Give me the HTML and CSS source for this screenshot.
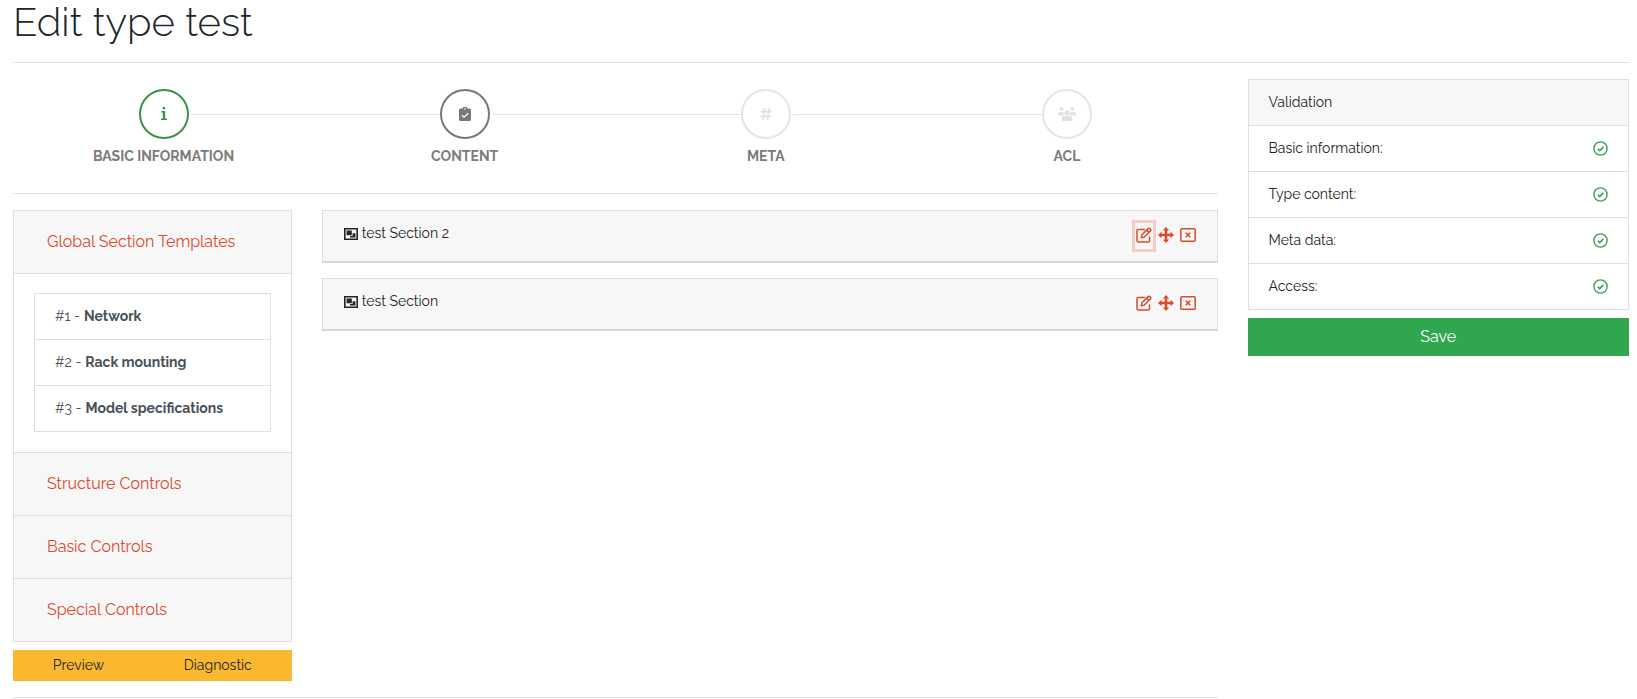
FILE: index.html
```html
<!DOCTYPE html>
<html lang="en">
<head>
<meta charset="utf-8">
<meta name="viewport" content="width=device-width, initial-scale=1">
<title>Edit type test</title>
<link rel="stylesheet" href="styles.css">
</head>
<body>
<svg class="sprite" aria-hidden="true">
  <symbol id="i-check" viewBox="0 0 15 15"><g fill="none" stroke="currentColor"><circle cx="7.500" cy="7.500" r="6.600" stroke-width="1.400"/><path d="M4.700 7.700l2 1.900 3.700-3.700" stroke-width="1.500"/></g></symbol>
  <symbol id="i-group" viewBox="0 0 16 12"><path fill="currentColor" fill-rule="evenodd" d="M1 0h14v12H1zM2.600 1.600v8.800h10.800V1.600z"/><path fill="currentColor" d="M3.600 2.600h5.200v4.600H3.600zM9.600 5.200h2.800v4.400H7V8h2.600z"/></symbol>
  <symbol id="i-edit" viewBox="0 0 16 16"><g fill="none" stroke="currentColor" stroke-width="1.500" stroke-linejoin="round" stroke-linecap="round"><path d="M8.500 2.500H2.300A1.300 1.300 0 0 0 1 3.800v9.900A1.300 1.300 0 0 0 2.300 15h9.900a1.300 1.300 0 0 0 1.300-1.300V10"/><path d="M5.300 10.700l.4-2.700 6.400-6.400a1.300 1.300 0 0 1 1.800 0l.5.5a1.300 1.300 0 0 1 0 1.800L8 10.300zM10.800 3l2.200 2.200"/></g></symbol>
  <symbol id="i-move" viewBox="0 0 16 16"><path fill="currentColor" d="M8 0l3.200 3.500H9.200v3.300h3.300V4.800L16 8l-3.500 3.200V9.200H9.200v3.300h2L8 16l-3.200-3.500h2V9.200H3.500v2L0 8l3.500-3.200v2h3.300V3.500h-2z"/></symbol>
  <symbol id="i-close" viewBox="0 0 16 14"><g fill="none" stroke="currentColor" stroke-width="1.500"><rect x=".8" y=".8" width="14.400" height="12.400" rx="1"/><path d="M5.700 4.700l4.600 4.600M10.300 4.700L5.700 9.300" stroke-width="1.500"/></g></symbol>
</svg>

<main class="page">
  <h1 class="title">Edit type test</h1>
  <hr class="rule">
  <div class="columns">
    <div class="editor">
      <nav aria-label="Steps">
        <ol class="steps">
          <li class="step step-done"><button class="step-button" type="button"><span class="step-circle"><svg width="6" height="14" viewBox="0 0 6 14"><path fill="currentColor" d="M1.700 0h2.400v2.300H1.700zM.3 4h3.900v7.500H6V13H0v-1.500h1.800v-6H.3z"/></svg></span>Basic information</button></li>
          <li class="step step-current"><button class="step-button" type="button" aria-current="step"><span class="step-circle"><svg width="12" height="14" viewBox="0 0 12 14"><path fill="currentColor" d="M1.500 1.500h2.300a2.200 2.200 0 0 1 4.400 0h2.300A1.500 1.500 0 0 1 12 3v9.500a1.500 1.500 0 0 1-1.500 1.500h-9A1.500 1.500 0 0 1 0 12.500V3a1.500 1.500 0 0 1 1.500-1.500z"/><path fill="#fff" d="M5.300 1.200h1.400v1.300H5.300z"/><path fill="none" stroke="#fff" stroke-width="1.300" d="M2.800 8.200l2.200 2 4.300-4"/></svg></span>Content</button></li>
          <li class="step"><button class="step-button" type="button"><span class="step-circle"><svg width="12" height="14" viewBox="0 0 12 14"><path fill="none" stroke="currentColor" stroke-width="1.700" d="M4.600 1L2.900 13M9.200 1L7.500 13M.9 4.700h11M.2 9.300h11"/></svg></span>Meta</button></li>
          <li class="step"><button class="step-button" type="button"><span class="step-circle"><svg width="18" height="14" viewBox="0 0 18 14"><g fill="currentColor"><circle cx="3.600" cy="2" r="2"/><circle cx="14.400" cy="2" r="2"/><circle cx="9" cy="5.800" r="2.600"/><path d="M0 8.500V7.300A2.300 2.300 0 0 1 2.300 5h2.400l.9.400c-.3 1.300.1 2.300.9 3.100zM18 8.500V7.300A2.300 2.300 0 0 0 15.700 5h-2.400l-.9.400c.3 1.300-.1 2.300-.9 3.100zM3.700 14v-1.700A3.200 3.200 0 0 1 6.900 9.100h4.200a3.200 3.200 0 0 1 3.200 3.200V14z"/></g></svg></span>ACL</button></li>
        </ol>
      </nav>
      <hr class="rule">
      <div class="workspace">
        <aside class="palette">
          <div class="accordion">
            <h2 class="accordion-header"><a href="#global">Global Section Templates</a></h2>
            <div class="accordion-body" id="global">
              <ul class="list">
                <li class="list-item">#1 - <strong>Network</strong></li>
                <li class="list-item">#2 - <strong>Rack mounting</strong></li>
                <li class="list-item">#3 - <strong>Model specifications</strong></li>
              </ul>
            </div>
            <h2 class="accordion-header"><a href="#structure">Structure Controls</a></h2>
            <h2 class="accordion-header"><a href="#basic">Basic Controls</a></h2>
            <h2 class="accordion-header"><a href="#special">Special Controls</a></h2>
          </div>
          <div class="tools">
            <button class="tool" type="button">Preview</button>
            <button class="tool" type="button">Diagnostic</button>
          </div>
        </aside>
        <div class="sections">
          <section class="section">
            <div class="section-name"><svg width="16" height="12"><use href="#i-group"/></svg>test Section 2</div>
            <div class="actions">
              <button class="action action-focus" type="button" aria-label="Edit"><svg width="16" height="16"><use href="#i-edit"/></svg></button>
              <button class="action" type="button" aria-label="Move"><svg width="16" height="16"><use href="#i-move"/></svg></button>
              <button class="action" type="button" aria-label="Delete"><svg width="16" height="14"><use href="#i-close"/></svg></button>
            </div>
          </section>
          <section class="section">
            <div class="section-name"><svg width="16" height="12"><use href="#i-group"/></svg>test Section</div>
            <div class="actions">
              <button class="action" type="button" aria-label="Edit"><svg width="16" height="16"><use href="#i-edit"/></svg></button>
              <button class="action" type="button" aria-label="Move"><svg width="16" height="16"><use href="#i-move"/></svg></button>
              <button class="action" type="button" aria-label="Delete"><svg width="16" height="14"><use href="#i-close"/></svg></button>
            </div>
          </section>
        </div>
      </div>
      <hr class="rule">
    </div>
    <aside class="summary">
      <ul class="list validation">
        <li class="list-item list-head">Validation</li>
        <li class="list-item">Basic information: <svg width="15" height="15"><use href="#i-check"/></svg></li>
        <li class="list-item">Type content: <svg width="15" height="15"><use href="#i-check"/></svg></li>
        <li class="list-item">Meta data: <svg width="15" height="15"><use href="#i-check"/></svg></li>
        <li class="list-item">Access: <svg width="15" height="15"><use href="#i-check"/></svg></li>
      </ul>
      <button class="save" type="button">Save</button>
    </aside>
  </div>
</main>
</body>
</html>
```

FILE: styles.css
```css
* {
  box-sizing: border-box;
}

body {
  margin: 0;
  background: #fff;
  color: #212529;
  font: 400 14px/21px Raleway, Lato, sans-serif;
}

button {
  border: 0;
  padding: 0;
  background: none;
  color: inherit;
  font: inherit;
  cursor: pointer;
}

svg {
  display: block;
  flex: none;
}

.sprite {
  position: absolute;
  width: 0;
  height: 0;
}

.page {
  padding: 0 8px 0 13px;
}

.title {
  margin: 0 0 18px;
  font-size: 40px;
  font-weight: 300;
  line-height: 44px;
}

.rule {
  margin: 0;
  border: 0;
  border-top: 1px solid #e1e1e1;
}

.columns,
.workspace {
  display: grid;
  grid-template-columns: repeat(4, minmax(0, 1fr));
  column-gap: 30px;
  align-items: start;
}

.editor,
.sections {
  grid-column: span 3;
}

.steps {
  display: flex;
  margin: 0;
  padding: 26px 0;
  list-style: none;
}

.step {
  display: flex;
  flex: 1;
  flex-direction: column;
  position: relative;
}

.step + .step::before {
  content: "";
  position: absolute;
  top: 25px;
  right: calc(50% + 25px);
  left: calc(-50% + 27px);
  border-top: 1px solid #e1e1e1;
}

.step-button {
  display: flex;
  flex-direction: column;
  align-items: center;
  gap: 7px;
  color: #7b7b7b;
  font-weight: 700;
  text-transform: uppercase;
}

.step-circle {
  display: grid;
  place-items: center;
  width: 50px;
  height: 50px;
  border: 2px solid #e5e5e5;
  border-radius: 50%;
  color: #e1e1e1;
}

.step-done .step-circle {
  border-color: #3b9148;
  color: #3b9148;
}

.step-current .step-circle {
  border-color: #777;
  color: #777;
}

.workspace {
  padding: 16px 0;
}

.accordion {
  border: 1px solid #dfdfdf;
}

.accordion-header {
  margin: 0;
  padding: 19px 33px;
  background: #f7f7f7;
  font-size: 16px;
  font-weight: 400;
  line-height: 24px;
}

.accordion-header + .accordion-header,
.accordion-body + .accordion-header {
  border-top: 1px solid #dfdfdf;
}

.accordion-header a {
  color: #dc4a2c;
  text-decoration: none;
}

.accordion-body {
  padding: 19px 20px 20px;
  border-top: 1px solid #dfdfdf;
}

.list {
  margin: 0;
  padding: 0;
  border: 1px solid #dfdfdf;
  color: #495057;
  list-style: none;
}

.list-item {
  display: flex;
  gap: 4px;
  align-items: center;
  padding: 12px 20px;
}

.list-item + .list-item {
  border-top: 1px solid #dfdfdf;
}

.list-item strong {
  font-weight: 700;
}

.validation {
  color: #212529;
}

.validation .list-item {
  justify-content: space-between;
}

.list-head {
  background: #f7f7f7;
}

.list-item svg {
  color: #3b9c58;
}

.tools {
  display: flex;
  justify-content: space-around;
  margin-top: 8px;
  padding: 5px 0;
  background: #fab82e;
}

.sections {
  display: grid;
  gap: 15px;
}

.section {
  display: flex;
  justify-content: space-between;
  align-items: flex-start;
  padding: 12px 20px;
  border: 1px solid #dfdfdf;
  border-bottom: 2px solid #d6d6d6;
  background: #f7f7f7;
}

.section-name {
  display: flex;
  gap: 3px;
  align-items: center;
}

.actions {
  display: flex;
  gap: 4px;
  color: #dc4a2c;
}

.action {
  display: grid;
  place-items: center;
  width: 18px;
  height: 26px;
  padding-bottom: 2px;
}

.action-focus {
  box-shadow: 0 0 0 3px #f3cdc5;
}

.summary {
  padding-top: 16px;
}

.save {
  width: 100%;
  margin-top: 8px;
  padding: 7px;
  background: #30a64e;
  color: #fff;
  font-size: 16px;
  line-height: 24px;
}
```
